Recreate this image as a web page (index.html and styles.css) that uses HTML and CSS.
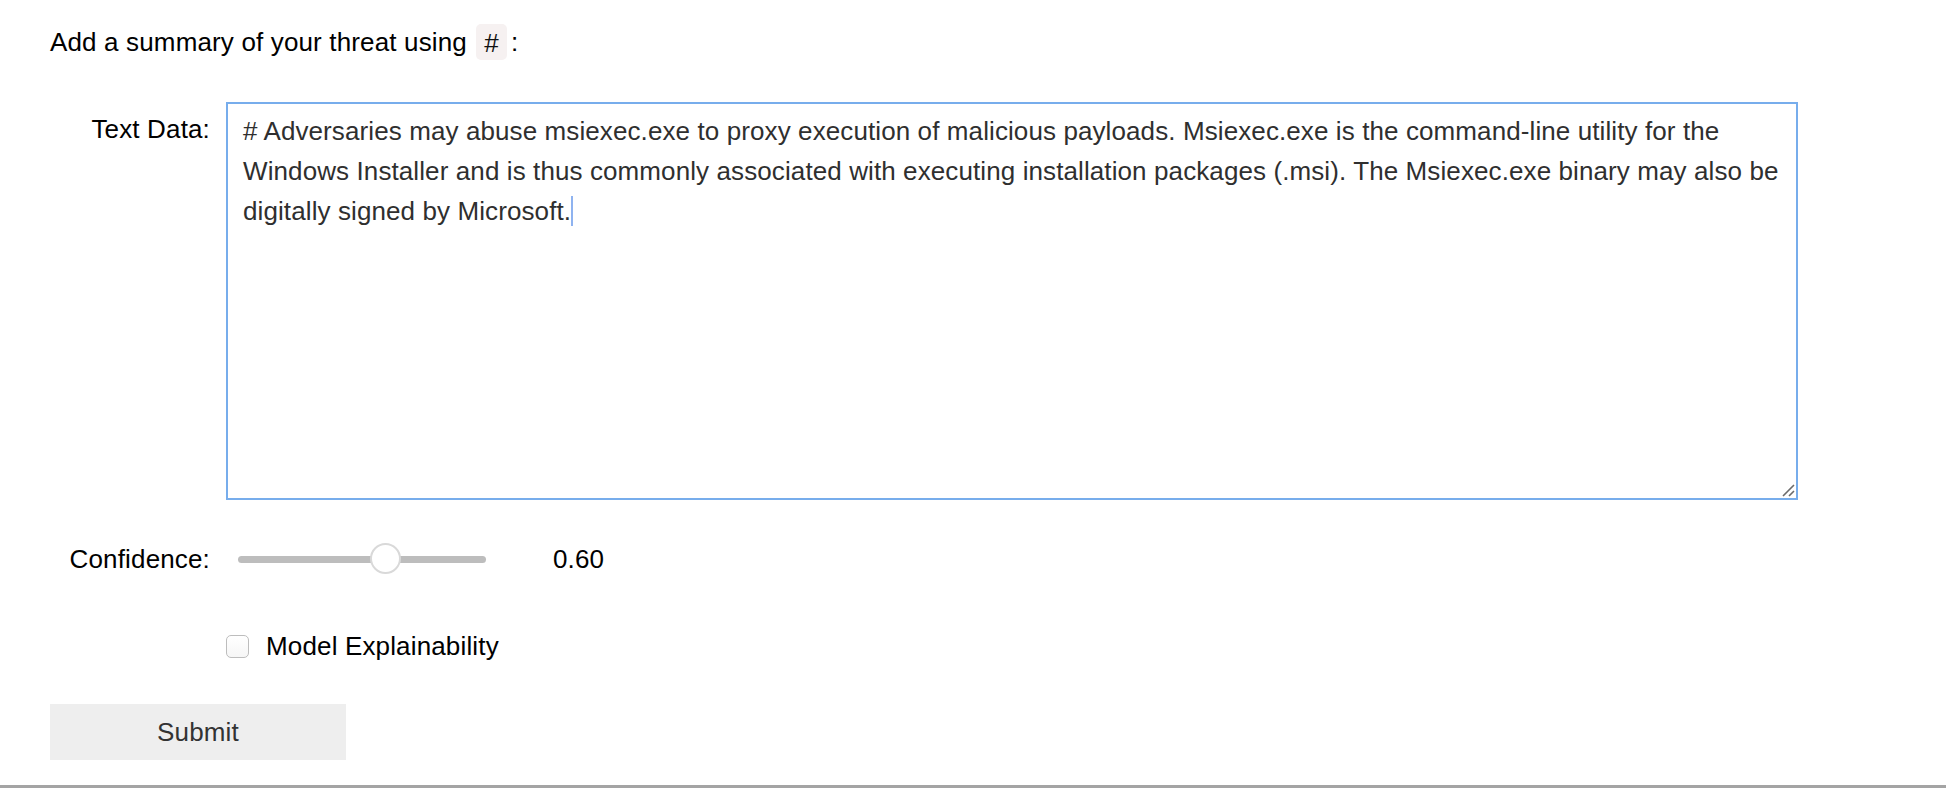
FILE: index.html
```html
<!DOCTYPE html>
<html>
<head>
<meta charset="utf-8">
<link rel="stylesheet" href="styles.css">
</head>
<body>
<div class="page">
  <div class="heading">Add a summary of your threat using <code class="chip">#</code><span class="colon">:</span></div>

  <div class="row row-text">
    <label class="label">Text Data:</label>
    <div class="textarea" role="textbox" aria-multiline="true">
      <span class="content"># Adversaries may abuse msiexec.exe to proxy execution of malicious payloads. Msiexec.exe is the command-line utility for the<br>Windows Installer and is thus commonly associated with executing installation packages (.msi). The Msiexec.exe binary may also be<br>digitally signed by Microsoft.</span><span class="caret"></span>
      <svg class="grip" width="14" height="14" viewBox="0 0 14 14"><path d="M2 13 L13 2 M8 13 L13 8" stroke="#6b6b6b" stroke-width="1.6" fill="none"/></svg>
    </div>
  </div>

  <div class="row row-slider">
    <label class="label">Confidence:</label>
    <div class="slider">
      <div class="track"><div class="handle"></div></div>
    </div>
    <div class="readout">0.60</div>
  </div>

  <div class="row row-check">
    <div class="spacer"></div>
    <span class="checkbox"></span>
    <span class="check-label">Model Explainability</span>
  </div>

  <button class="submit">Submit</button>
</div>
<div class="rule"></div>
</body>
</html>
```

FILE: styles.css
```css
html, body {
  margin: 0;
  padding: 0;
  background: #fff;
}
body {
  font-family: "Liberation Sans", Arial, sans-serif;
  font-size: 26px;
  letter-spacing: 0.15px;
  color: #000;
  height: 790px;
  overflow: hidden;
  display: flex;
  flex-direction: column;
}
.page {
  padding-left: 50px;
  display: flex;
  flex-direction: column;
  align-items: flex-start;
}
.heading {
  margin-top: 24px;
  height: 36px;
  line-height: 36px;
  display: flex;
  align-items: center;
  white-space: pre;
}
.chip {
  font-family: "Liberation Sans", Arial, sans-serif;
  font-size: 26px;
  background: #f6f1f1;
  border-radius: 5px;
  height: 36px;
  line-height: 38px;
  padding: 0 8px;
  margin-left: 2px;
  color: #111;
}
.colon {
  margin-left: 4px;
}
.row {
  display: flex;
  align-items: center;
}
.label {
  width: 160px;
  margin-right: 16px;
  text-align: right;
  flex-shrink: 0;
}
.row-text {
  margin-top: 42px;
  align-items: flex-start;
}
.row-text .label {
  margin-top: 12px;
}
.textarea {
  position: relative;
  box-sizing: border-box;
  width: 1572px;
  height: 398px;
  border: 2px solid #77adec;
  padding: 7px 8px 7px 15px;
  line-height: 40px;
  color: #2f2f2f;
  white-space: nowrap;
  letter-spacing: 0.1px;
}
.caret {
  display: inline-block;
  width: 2px;
  height: 30px;
  background: #8fb3f0;
  vertical-align: -6px;
}
.grip {
  position: absolute;
  right: 1px;
  bottom: 1px;
}
.row-slider {
  margin-top: 31px;
  height: 56px;
}
.slider {
  padding: 0 12px;
  display: flex;
  align-items: center;
}
.track {
  position: relative;
  width: 248px;
  height: 7px;
  border-radius: 4px;
  background: #bdbdbd;
}
.handle {
  position: absolute;
  left: 132px;
  top: -13px;
  box-sizing: border-box;
  width: 31px;
  height: 31px;
  border-radius: 50%;
  background: #fff;
  border: 2px solid #d9d9d9;
}
.readout {
  margin-left: 55px;
}
.row-check {
  margin-top: 31px;
  height: 56px;
}
.spacer {
  width: 176px;
}
.checkbox {
  box-sizing: border-box;
  width: 23px;
  height: 23px;
  border: 1px solid #bdbdbd;
  border-radius: 5px;
  background: linear-gradient(#fff, #f6f6f6);
}
.check-label {
  margin-left: 17px;
}
.submit {
  margin-top: 30px;
  width: 296px;
  height: 56px;
  border: none;
  background: #eeeeee;
  font-family: "Liberation Sans", Arial, sans-serif;
  font-size: 26px;
  letter-spacing: 0.15px;
  color: #333;
  padding: 0;
}
.rule {
  margin-top: 25px;
  height: 3px;
  background: #a4a4a4;
}
```
